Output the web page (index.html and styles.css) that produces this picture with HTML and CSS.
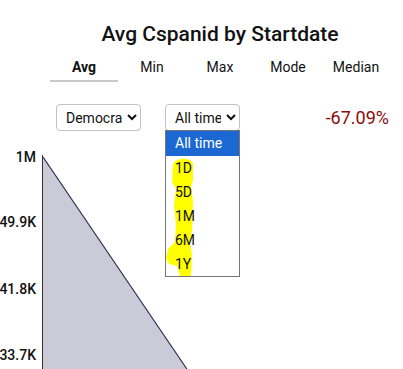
FILE: index.html
```html
<!DOCTYPE html>
<html>
<head>
    <title>Avg Cspanid by Startdate</title>
    <link rel="stylesheet" href="styles.css">
</head>
<body>
    <div class="panel">
        <h1 class="title">Avg Cspanid by Startdate</h1>
        <div class="tabs">
            <div class="tab active">Avg</div>
            <div class="tab">Min</div>
            <div class="tab">Max</div>
            <div class="tab">Mode</div>
            <div class="tab">Median</div>
        </div>
        <div class="controls">
            <select class="pick party">
                <option>Democrat</option>
            </select>
            <div class="range-wrap">
                <select class="pick range">
                    <option>All time</option>
                </select>
                <div class="dropdown">
                    <div class="opt selected">All time</div>
                    <div class="opt">1D</div>
                    <div class="opt">5D</div>
                    <div class="opt">1M</div>
                    <div class="opt">6M</div>
                    <div class="opt">1Y</div>
                    <svg class="marker" width="75" height="147" viewBox="165 131 75 147">
                        <path d="M173,166 C173,159 189,157 193,164 L193,181 L191,188 L193,202 L192,232 L190,244 L192,256 L191,277 L180,277 L177,267 L169,265 L166,259 L168,250 L175,243 L176,226 L174,206 L176,190 L172,183 Z" fill="#ffff00"/>
                    </svg>
                </div>
            </div>
            <div class="change">-67.09%</div>
        </div>
    </div>
    <svg class="chart" width="403" height="240" viewBox="0 145 403 240">
        <polygon points="43,157 187,369 195,381 43,385" fill="#cbcbd7"/>
        <line x1="43" y1="157" x2="195" y2="381" stroke="#2a2a55" stroke-width="1.2"/>
        <line x1="42.5" y1="155" x2="42.5" y2="385" stroke="#333" stroke-width="1"/>
        <text x="36" y="162" class="axis">1M</text>
        <text x="36" y="227" class="axis">49.9K</text>
        <text x="36" y="294" class="axis">41.8K</text>
        <text x="36" y="360" class="axis">33.7K</text>
    </svg>
</body>
</html>
```

FILE: styles.css
```css
body {
    margin: 0;
    background-color: #ffffff;
    color: #111111;
    font-family: Roboto, "Liberation Sans", sans-serif;
    overflow: hidden;
}
.panel {
    width: 340px;
    margin-left: 50px;
}
.title {
    margin: 0;
    padding-top: 21px;
    text-align: center;
    font-size: 21px;
    font-weight: 500;
    line-height: 26px;
}
.tabs {
    display: grid;
    grid-template-columns: repeat(5, 68px);
    margin-top: 11px;
}
.tab {
    text-align: center;
    font-size: 14px;
    line-height: 18px;
    padding-bottom: 4px;
    border-bottom: 2px solid transparent;
}
.tab.active {
    font-weight: bold;
    border-bottom-color: #c8c8c8;
}
.controls {
    display: flex;
    align-items: center;
    margin-top: 22px;
    padding-left: 6px;
}
.pick {
    height: 27px;
    font-family: Roboto, "Liberation Sans", sans-serif;
    font-size: 14px;
    color: #111111;
    background-color: #ffffff;
    border: 1px solid #c2c2c2;
    border-radius: 4px;
    padding: 0 2px 0 5px;
}
.party {
    width: 85px;
}
.range-wrap {
    position: relative;
    margin-left: 24px;
}
.range {
    width: 75px;
}
.dropdown {
    position: absolute;
    top: 26px;
    left: 0;
    width: 73px;
    background-color: #ffffff;
    border: 1px solid #767676;
    font-size: 14px;
    z-index: 2;
}
.opt {
    position: relative;
    z-index: 1;
    height: 24px;
    line-height: 24px;
    padding-left: 9px;
}
.opt.selected {
    height: 25px;
    line-height: 25px;
    background-color: #1b68d3;
    color: #ffffff;
}
.marker {
    position: absolute;
    top: -1px;
    left: -1px;
    z-index: 0;
}
.change {
    margin-left: auto;
    margin-right: 1px;
    font-size: 18px;
    color: #8b0a0a;
}
.chart {
    display: block;
    margin-top: 14px;
}
.axis {
    font-family: Roboto, "Liberation Sans", sans-serif;
    font-size: 14px;
    font-weight: 500;
    text-anchor: end;
    fill: #111111;
}
```
